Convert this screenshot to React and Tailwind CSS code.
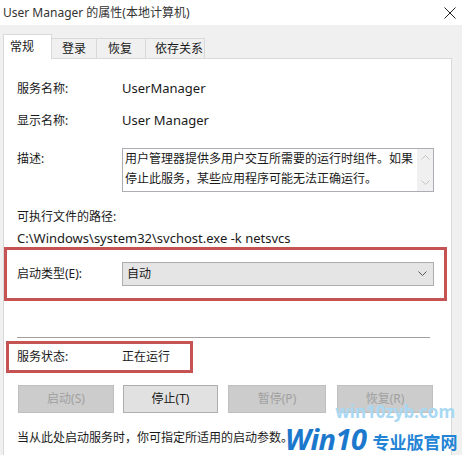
import React from 'react';

const font = { fontFamily: '"Noto Sans", "Noto Sans CJK SC", sans-serif' };

const Chevron = ({ up, className }) => (
  <svg width="9" height="6" viewBox="0 0 9 6" className={className}>
    <path d={up ? 'M0.5 5.5 L4.5 1.5 L8.5 5.5' : 'M0.5 0.5 L4.5 4.5 L8.5 0.5'} fill="none" stroke="currentColor" strokeWidth="1" />
  </svg>
);

const Row = ({ label, value, className = '' }) => (
  <div className={`flex items-center h-[20px] ${className}`}>
    <span className="w-[105px]">{label}</span>
    <span className="text-[13px]">{value}</span>
  </div>
);

const App = () => {
  return (
    <div style={font} className="relative w-[462px] h-[455px] bg-[#f0f0f0] overflow-hidden text-[12px] text-[#1a1a1a]">
      {/* title bar */}
      <div className="h-[25px] bg-white flex items-center justify-between pl-[3px] pr-[6px]">
        <span className="text-[12px] text-[#333]">User Manager 的属性(本地计算机)</span>
        <svg width="12" height="12" viewBox="0 0 12 12" className="text-[#222]">
          <path d="M0.5 0.5 L11.5 11.5 M11.5 0.5 L0.5 11.5" stroke="currentColor" strokeWidth="1" />
        </svg>
      </div>

      {/* tabs */}
      <div className="flex items-end h-[34px] pl-[3px]">
        <div className="w-[49px] h-[25px] bg-white border border-[#d9d9d9] border-b-0 pl-[6px] pt-[3px] relative z-10">常规</div>
        <div className="w-[45px] h-[21px] border-t border-r border-[#d9d9d9] pl-[10px] pt-[1px]">登录</div>
        <div className="w-[49px] h-[21px] border-t border-r border-[#d9d9d9] pl-[11px] pt-[1px]">恢复</div>
        <div className="w-[59px] h-[21px] border-t border-r border-[#d9d9d9] pl-[9px] pt-[1px]">依存关系</div>
      </div>

      {/* panel */}
      <div className="ml-[3px] w-[449px] h-[400px] -mt-px bg-white border border-[#d9d9d9] pl-[13px] pt-[20px]">
        <Row label="服务名称:" value="UserManager" />
        <Row label="显示名称:" value="User Manager" className="mt-[12px]" />

        <div className="flex mt-[17px]">
          <span className="w-[105px] mt-[1px] h-[20px] leading-[20px]">描述:</span>
          <div className="w-[312px] h-[44px] border border-[#abadb3] flex">
            <div className="flex-1 pl-[2px] leading-[20px]">
              用户管理器提供多用户交互所需要的运行时组件。如果停止此服务，某些应用程序可能无法正确运行。
            </div>
            <div className="w-[16px] bg-[#f0f0f0] flex flex-col items-center justify-between py-[5px] text-[#c2c2c2]">
              <Chevron up />
              <Chevron />
            </div>
          </div>
        </div>

        <div className="mt-[15px] h-[20px] leading-[20px]">可执行文件的路径:</div>
        <div className="mt-[2px] h-[18px] leading-[18px] text-[13px]">C:\Windows\system32\svchost.exe -k netsvcs</div>

        <div className="-ml-[13px] w-[443px] h-[54px] border-[3px] border-[#c55353] flex items-center pl-[10px]">
          <span className="w-[105px]">启动类型(E):</span>
          <div className="w-[312px] h-[24px] bg-[#e5e5e5] border border-[#adadad] flex items-center justify-between pl-[4px] pr-[6px]">
            <span>自动</span>
            <Chevron className="text-[#555]" />
          </div>
        </div>

        <div className="mt-[36px] w-[413px] h-px bg-[#a0a0a0]" />

        <div className="mt-[3px] -ml-[11px] w-[187px] h-[32px] border-[3px] border-[#c55353] flex items-center pl-[8px]">
          <span className="w-[105px]">服务状态:</span>
          <span>正在运行</span>
        </div>

        <div className="flex mt-[12px] h-[28px]">
          <div className="ml-px w-[96px] bg-[#cccccc] border border-[#bfbfbf] text-[#a0a0a0] flex items-center justify-center">启动(S)</div>
          <div className="ml-[9px] w-[95px] bg-[#e1e1e1] border border-[#adadad] flex items-center justify-center">停止(T)</div>
          <div className="ml-[10px] w-[98px] bg-[#cccccc] border border-[#bfbfbf] text-[#a0a0a0] flex items-center justify-center">暂停(P)</div>
          <div className="ml-[11px] w-[96px] bg-[#cccccc] border border-[#bfbfbf] text-[#a0a0a0] flex items-center justify-center">恢复(R)</div>
        </div>

        <div className="mt-[15px] h-[20px] leading-[20px]">当从此处启动服务时，你可指定所适用的启动参数。</div>
      </div>

      {/* watermark */}
      <div className="absolute right-[7px] top-[403px] text-[17px] font-bold text-[#a9d9f2] leading-none whitespace-nowrap">win10zyb.com</div>
      <div className="absolute left-[285px] top-[424px] flex items-end leading-none whitespace-nowrap">
        <span className="text-[29px] font-bold italic text-[#1c78cc] tracking-[-0.5px]">Win10</span>
        <span className="ml-[6px] mb-[2px] text-[17px] font-bold text-[#2384d6]">专业版官网</span>
      </div>
    </div>
  );
};

export default App;
